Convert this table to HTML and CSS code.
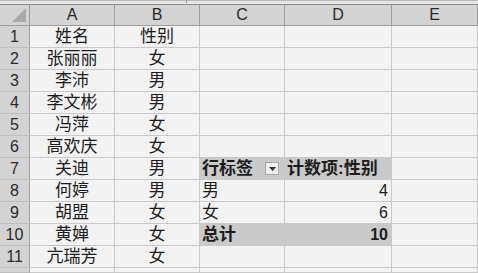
FILE: index.html
```html
<!DOCTYPE html>
<html lang="zh-CN">
<head>
    <meta charset="UTF-8">
    <title>数据透视表</title>
    <link rel="stylesheet" href="styles.css">
</head>
<body>
    <div class="topbar"><span class="tick"></span></div>
    <div class="sheet">
        <div class="corner"><span class="tri"></span></div>
        <div class="colhead">A</div>
        <div class="colhead">B</div>
        <div class="colhead">C</div>
        <div class="colhead">D</div>
        <div class="colhead">E</div>

        <div class="rowhead">1</div><div class="cell mid">姓名</div><div class="cell mid">性别</div><div class="cell"></div><div class="cell"></div><div class="cell"></div>
        <div class="rowhead">2</div><div class="cell mid">张丽丽</div><div class="cell mid">女</div><div class="cell"></div><div class="cell"></div><div class="cell"></div>
        <div class="rowhead">3</div><div class="cell mid">李沛</div><div class="cell mid">男</div><div class="cell"></div><div class="cell"></div><div class="cell"></div>
        <div class="rowhead">4</div><div class="cell mid">李文彬</div><div class="cell mid">男</div><div class="cell"></div><div class="cell"></div><div class="cell"></div>
        <div class="rowhead">5</div><div class="cell mid">冯萍</div><div class="cell mid">女</div><div class="cell"></div><div class="cell"></div><div class="cell"></div>
        <div class="rowhead">6</div><div class="cell mid">高欢庆</div><div class="cell mid">女</div><div class="cell"></div><div class="cell"></div><div class="cell"></div>
        <div class="rowhead">7</div><div class="cell mid">关迪</div><div class="cell mid">男</div>
        <div class="cell pivot-head label">
            <span>行标签</span>
            <span class="filter"><svg width="7" height="4" viewBox="0 0 7 4"><path d="M0 0h7L3.5 4z" fill="#333"/></svg></span>
        </div>
        <div class="cell pivot-head">计数项:性别</div>
        <div class="cell"></div>
        <div class="rowhead">8</div><div class="cell mid">何婷</div><div class="cell mid">男</div><div class="cell">男</div><div class="cell num">4</div><div class="cell"></div>
        <div class="rowhead">9</div><div class="cell mid">胡盟</div><div class="cell mid">女</div><div class="cell">女</div><div class="cell num">6</div><div class="cell"></div>
        <div class="rowhead">10</div><div class="cell mid">黄婵</div><div class="cell mid">女</div><div class="cell pivot-total first">总计</div><div class="cell pivot-total num">10</div><div class="cell"></div>
        <div class="rowhead">11</div><div class="cell mid">亢瑞芳</div><div class="cell mid">女</div><div class="cell"></div><div class="cell"></div><div class="cell"></div>
        <div class="rowhead"></div><div class="cell"></div><div class="cell"></div><div class="cell"></div><div class="cell"></div><div class="cell"></div>
    </div>
</body>
</html>
```

FILE: styles.css
```css
* {
    box-sizing: border-box;
}

body {
    margin: 0;
    width: 478px;
    height: 273px;
    overflow: hidden;
    background-color: #f3f3f3;
    font-family: "Liberation Sans", "Noto Sans CJK SC", sans-serif;
    font-size: 16px;
    color: #1c1c1c;
}

.topbar {
    height: 5px;
    background-color: #e6e6e6;
    border-top: 1px solid #b8b8b8;
    border-bottom: 1px solid #8c8c8c;
    position: relative;
}

.topbar .tick {
    position: absolute;
    left: 186px;
    top: -1px;
    width: 1px;
    height: 3px;
    background-color: #9a9a9a;
}

/* last row is only partly visible at the bottom edge */
.sheet {
    display: grid;
    grid-template-columns: 30px 85px 85px 85px 107px 86px;
    grid-template-rows: 21px repeat(11, 22px) 5px;
    overflow: hidden;
}

.corner,
.colhead,
.rowhead {
    background-color: #d3d3d3;
}

.corner {
    position: relative;
    border-right: 1px solid #9e9e9e;
    border-bottom: 1px solid #9e9e9e;
}

.corner .tri {
    position: absolute;
    right: 3px;
    bottom: 3px;
    width: 0;
    height: 0;
    border-left: 14px solid transparent;
    border-bottom: 14px solid #a9a9a9;
}

.colhead {
    border-right: 1px solid #9e9e9e;
    border-bottom: 1px solid #9e9e9e;
    text-align: center;
    line-height: 20px;
    color: #2a2a2a;
}

.rowhead {
    border-right: 1px solid #9e9e9e;
    border-bottom: 1px solid #bdbdbd;
    text-align: center;
    line-height: 21px;
    color: #2a2a2a;
    overflow: hidden;
}

.cell {
    border-right: 1px solid #c9c9c9;
    border-bottom: 1px solid #c9c9c9;
    line-height: 21px;
    padding: 0 2px;
    white-space: nowrap;
    font-size: 17px;
    overflow: hidden;
}

.mid {
    text-align: center;
}

.num {
    text-align: right;
    padding-right: 3px;
    font-size: 16px;
}

.pivot-head,
.pivot-total {
    background-color: #cacaca;
    font-weight: bold;
}

.pivot-head.label {
    display: flex;
    align-items: center;
    justify-content: space-between;
    padding-right: 5px;
    border-right-color: #cacaca;
}

.pivot-total.first {
    border-right-color: #cacaca;
}

.filter {
    width: 14px;
    height: 13px;
    background-color: #f0f0f0;
    border: 1px solid #a6a6a6;
    display: flex;
    align-items: center;
    justify-content: center;
}
```
